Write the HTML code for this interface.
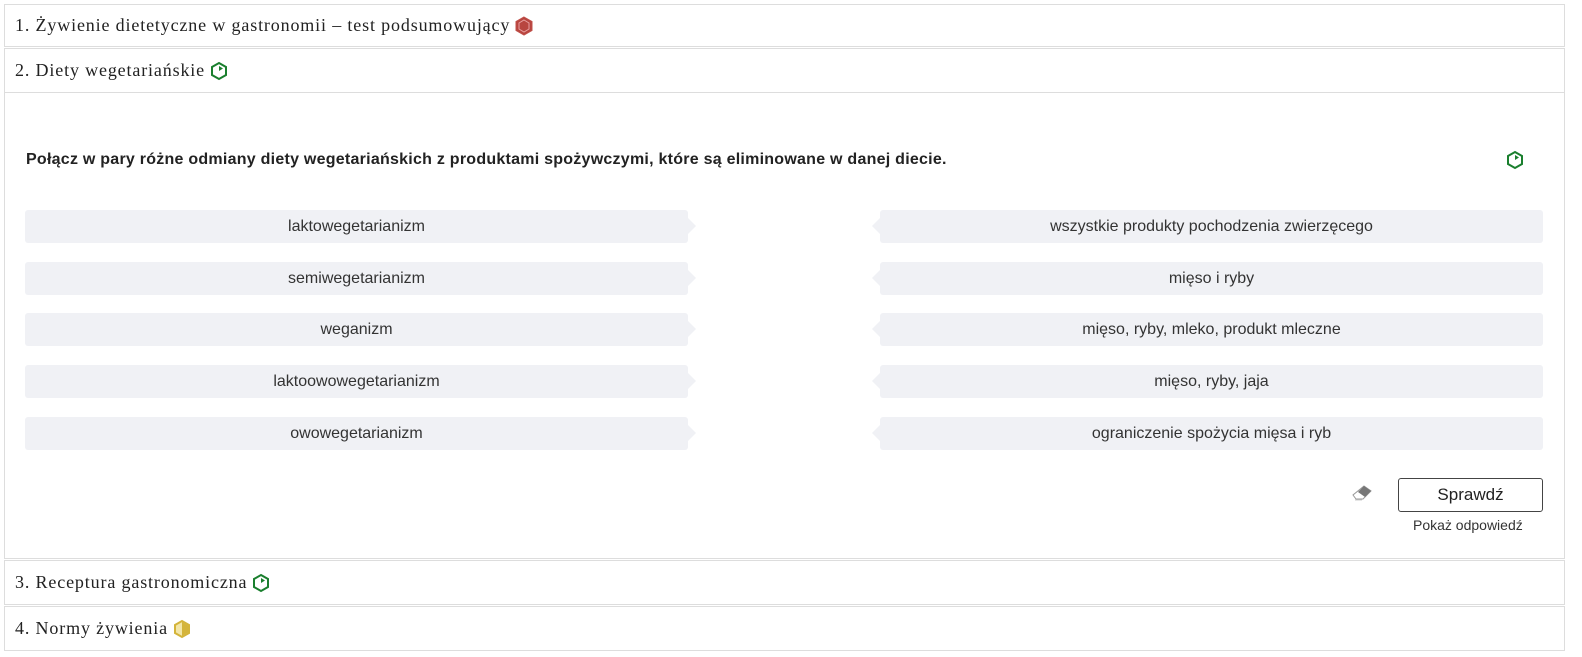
<!DOCTYPE html>
<html><head><meta charset="utf-8"><style>
body{margin:0;background:#fff;width:1582px;height:657px;position:relative;font-family:"Liberation Sans",sans-serif;color:#222;overflow:hidden}
.h{position:absolute;left:4px;width:1561px;border:1px solid #ddd;box-sizing:border-box;font-family:"Liberation Serif",serif;font-size:18px;letter-spacing:0.85px;color:#222;padding-left:10px;display:flex;align-items:center}
.h svg{margin-left:5px}
.c{position:absolute;left:4px;top:92px;width:1561px;height:467px;border:1px solid #ddd;border-top:none;box-sizing:border-box}
.q{position:absolute;left:26px;top:151px;font-weight:bold;font-size:16px;letter-spacing:0.25px;color:#222}
.it{position:absolute;height:33px;background:#f0f1f5;border-radius:3px;font-size:16px;color:#333;display:flex;align-items:center;justify-content:center}
.l{left:25px;width:663px}
.r{left:880px;width:663px}
.l:after{content:"";position:absolute;right:-8px;top:8px;border-left:8px solid #f0f1f5;border-top:8px solid transparent;border-bottom:8px solid transparent}
.r:before{content:"";position:absolute;left:-8px;top:8px;border-right:8px solid #f0f1f5;border-top:8px solid transparent;border-bottom:8px solid transparent}
.btn{position:absolute;left:1398px;top:478px;width:145px;height:34px;border:1px solid #444;border-radius:3px;box-sizing:border-box;display:flex;align-items:center;justify-content:center;font-size:17px;color:#222}
.sh{position:absolute;left:1413px;top:517px;font-size:14px;color:#333}
</style></head><body>
<div class="h" style="top:4px;height:43px">1. Żywienie dietetyczne w gastronomii – test podsumowujący
<svg width="18" height="20" viewBox="0 0 18 20"><path d="M9 1 L17 5.5 V14.5 L9 19 L1 14.5 V5.5Z" fill="#b8453f" stroke="#c0504a"/><path d="M9 4 L14 7 V13 L9 16 L4 13 V7Z" fill="none" stroke="#e9a0a0" stroke-width="1"/></svg></div>
<div class="h" style="top:48px;height:45px">2. Diety wegetariańskie
<svg width="18" height="20" viewBox="0 0 18 20"><path d="M9 2 L16 6 V14 L9 18 L2 14 V6Z" fill="none" stroke="#1a7f2e" stroke-width="2"/><path d="M9 5 V10 L13 7.5Z" fill="#1a7f2e"/></svg></div>
<div class="c">
<svg style="position:absolute;left:1501px;top:58px" width="18" height="20" viewBox="0 0 18 20"><path d="M9 2 L16 6 V14 L9 18 L2 14 V6Z" fill="none" stroke="#1a7f2e" stroke-width="2"/><path d="M9 5 V10 L13 7.5Z" fill="#1a7f2e"/></svg>
</div>
<div class="q">Połącz w pary różne odmiany diety wegetariańskich z produktami spożywczymi, które są eliminowane w danej diecie.</div>
<div class="it l" style="top:210px">laktowegetarianizm</div>
<div class="it r" style="top:210px">wszystkie produkty pochodzenia zwierzęcego</div>
<div class="it l" style="top:262px">semiwegetarianizm</div>
<div class="it r" style="top:262px">mięso i ryby</div>
<div class="it l" style="top:313px">weganizm</div>
<div class="it r" style="top:313px">mięso, ryby, mleko, produkt mleczne</div>
<div class="it l" style="top:365px">laktoowowegetarianizm</div>
<div class="it r" style="top:365px">mięso, ryby, jaja</div>
<div class="it l" style="top:417px">owowegetarianizm</div>
<div class="it r" style="top:417px">ograniczenie spożycia mięsa i ryb</div>
<svg style="position:absolute;left:1352px;top:485px" width="20" height="16" viewBox="0 0 20 16"><path d="M12 1 L19 6 L11 14 L4 14 L1 10Z" fill="#fff" stroke="#999"/><path d="M12 1 L19 6 L13 12 L6 7Z" fill="#777"/><path d="M3 15 H10" stroke="#ccc"/></svg>
<div class="btn">Sprawdź</div>
<div class="sh">Pokaż odpowiedź</div>
<div class="h" style="top:560px;height:45px">3. Receptura gastronomiczna
<svg width="18" height="20" viewBox="0 0 18 20"><path d="M9 2 L16 6 V14 L9 18 L2 14 V6Z" fill="none" stroke="#1a7f2e" stroke-width="2"/><path d="M9 5 V10 L13 7.5Z" fill="#1a7f2e"/></svg></div>
<div class="h" style="top:606px;height:45px">4. Normy żywienia
<svg width="18" height="20" viewBox="0 0 18 20"><path d="M9 2 L16 6 V14 L9 18 L2 14 V6Z" fill="#f3e6a8" stroke="#d4b43a" stroke-width="2"/><path d="M9 3 L15 6.5 V13.5 L9 17Z" fill="#d4b43a"/></svg></div>
</body></html>
